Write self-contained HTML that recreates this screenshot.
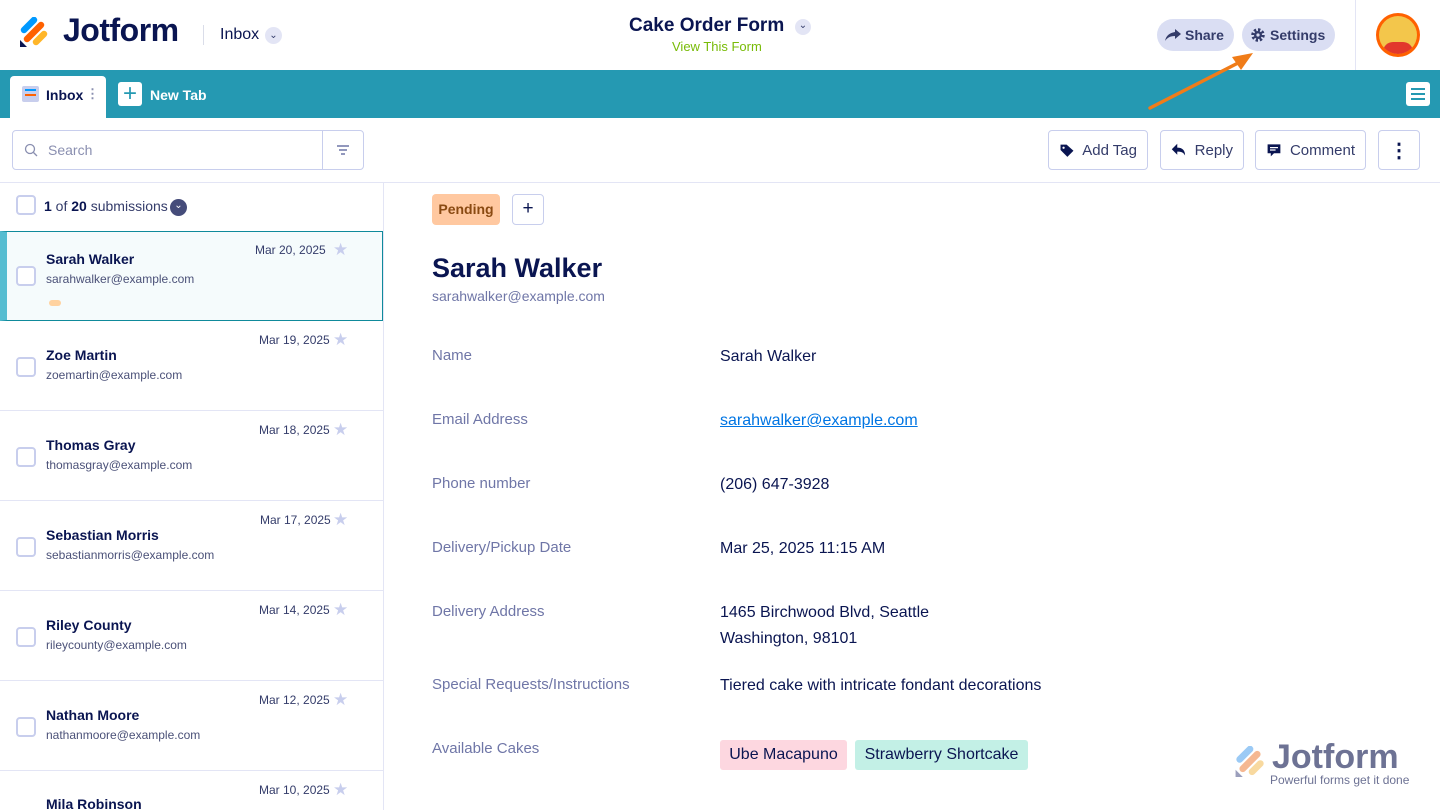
<!DOCTYPE html>
<html><head><meta charset="utf-8"><style>
*{box-sizing:border-box;margin:0;padding:0}
html,body{width:1440px;height:810px;overflow:hidden}
body{font-family:"Liberation Sans",sans-serif;color:#0a1551;background:#fff;position:relative}
.abs{position:absolute;white-space:nowrap}
.btn{position:absolute;top:130px;height:40px;border:1px solid #c8ceed;border-radius:4px;display:flex;align-items:center;font-size:15px;color:#343c6a;gap:8px;padding:0 10px;white-space:nowrap}
.item{position:absolute;left:0;width:383px;height:90px;border-bottom:1px solid #e3e5f5}
.cb{position:absolute;left:16px;width:20px;height:20px;border:2px solid #c8ceed;border-radius:4px;background:#fff}
.nm{position:absolute;left:46px;font-size:14px;font-weight:bold;white-space:nowrap}
.em{position:absolute;left:46px;font-size:12px;color:#4b5178}
.dt{position:absolute;font-size:12px;color:#343c6a;white-space:nowrap}
.st{position:absolute;left:333px;color:#c8ceed;font-size:17px}
.lb{position:absolute;left:432px;font-size:15px;color:#6f76a7}
.vl{position:absolute;left:720px;font-size:16px;color:#0a1551;line-height:26px;white-space:nowrap}
</style></head><body>
<!-- header logo -->
<svg class="abs" style="left:19px;top:17px" width="30" height="31" viewBox="0 0 30 31"><line x1="5" y1="13" x2="15" y2="3" stroke="#0099ff" stroke-width="6.5" stroke-linecap="round"/><line x1="8" y1="22" x2="22" y2="8" stroke="#ff6100" stroke-width="6.5" stroke-linecap="round"/><line x1="17" y1="25" x2="25" y2="17" stroke="#ffb629" stroke-width="6.5" stroke-linecap="round"/><path d="M1 23 L8 30 L1 30Z" fill="#0a1551"/></svg>
<div class="abs" style="left:63px;top:12px;font-size:32px;font-weight:bold;letter-spacing:-0.5px">Jotform</div>
<div class="abs" style="left:203px;top:25px;width:1px;height:20px;background:#dadde9"></div>
<div class="abs" style="left:220px;top:26px;font-size:16px">Inbox</div>
<div class="abs" style="left:265px;top:27px;width:17px;height:17px;border-radius:50%;background:#e3e5f5;font-size:10px;text-align:center;line-height:17px;color:#343c6a">⌄</div>
<div class="abs" style="left:629px;top:15px;font-size:19px;font-weight:bold">Cake Order Form</div>
<div class="abs" style="left:795px;top:19px;width:16px;height:16px;border-radius:50%;background:#e3e5f5;font-size:10px;text-align:center;line-height:14px;color:#343c6a">⌄</div>
<div class="abs" style="left:672px;top:39px;font-size:13px;color:#78bb07">View This Form</div>
<div class="abs" style="left:1157px;top:19px;width:77px;height:32px;border-radius:16px;background:#dadef3;font-size:14px;font-weight:bold;color:#343c6a;line-height:32px;padding-left:28px">Share<svg class="abs" style="left:8px;top:9px" width="16" height="14" viewBox="0 0 16 14"><path d="M10 1l6 5-6 5V8C5 8 2 10 0 13 1 8 4 5 10 4z" fill="#343c6a"/></svg></div>
<div class="abs" style="left:1242px;top:19px;width:93px;height:32px;border-radius:16px;background:#dadef3;font-size:14px;font-weight:bold;color:#343c6a;line-height:32px;padding-left:28px">Settings<svg class="abs" style="left:9px;top:9px" width="14" height="14" viewBox="0 0 14 14"><circle cx="7" cy="7" r="5" fill="none" stroke="#343c6a" stroke-width="3.5" stroke-dasharray="2.2 1.7"/><circle cx="7" cy="7" r="4" fill="#343c6a"/><circle cx="7" cy="7" r="1.6" fill="#dadef3"/></svg></div>
<div class="abs" style="left:1355px;top:0;width:1px;height:70px;background:#e3e5f5"></div>
<div class="abs" style="left:1376px;top:13px;width:44px;height:44px;border-radius:50%;background:#ff6100;padding:3px"><div style="width:38px;height:38px;border-radius:50%;background:#f3c64b;overflow:hidden;position:relative"><div style="position:absolute;bottom:0;left:4px;width:30px;height:12px;background:#e2382c;border-radius:10px 10px 0 0"></div></div></div>
<!-- tab bar -->
<div class="abs" style="left:0;top:70px;width:1440px;height:48px;background:#2599b2"></div>
<div class="abs" style="left:10px;top:76px;width:96px;height:42px;background:#fff;border-radius:4px 4px 0 0"></div>
<div class="abs" style="left:22px;top:86px;width:17px;height:16px;background:#c8ceed;border-radius:2px"><div style="margin:3px 3px;height:2px;background:#0099ff"></div><div style="margin:0 3px;height:2px;background:#ff6100"></div></div>
<div class="abs" style="left:46px;top:87px;font-size:14px;font-weight:bold">Inbox</div>
<div class="abs" style="left:86px;top:86px;font-size:13px;color:#8a8fb0;font-weight:bold">⋮</div>
<div class="abs" style="left:118px;top:82px;width:24px;height:24px;background:#fff;border-radius:3px;color:#2599b2;font-size:24px;text-align:center;line-height:23px">+</div>
<div class="abs" style="left:150px;top:87px;font-size:14px;font-weight:bold;color:#fff">New Tab</div>
<div class="abs" style="left:1406px;top:82px;width:24px;height:24px;background:#fff;border-radius:3px;padding:6px 5px"><div style="height:2px;background:#2599b2;margin-bottom:3px"></div><div style="height:2px;background:#2599b2;margin-bottom:3px"></div><div style="height:2px;background:#2599b2"></div></div>
<!-- arrow -->
<svg class="abs" style="left:1140px;top:40px" width="120" height="75" viewBox="0 0 120 75"><path d="M10 68 L100 22" stroke="#f07c18" stroke-width="3.5" stroke-linecap="round"/><path d="M113 13 L92 17 L101 30Z" fill="#f07c18"/></svg>
<!-- toolbar -->
<div class="abs" style="left:12px;top:130px;width:352px;height:40px;border:1px solid #c8ceed;border-radius:4px"></div>
<div class="abs" style="left:322px;top:131px;width:1px;height:38px;background:#c8ceed"></div>
<svg class="abs" style="left:24px;top:143px" width="14" height="14"><circle cx="6" cy="6" r="4.5" fill="none" stroke="#8a8fb0" stroke-width="1.3"/><path d="M9.5 9.5L13 13" stroke="#8a8fb0" stroke-width="1.3"/></svg>
<div class="abs" style="left:48px;top:142px;font-size:14px;color:#8a8fb0">Search</div>
<svg class="abs" style="left:336px;top:144px" width="14" height="12"><path d="M1 2h12M3 6h8M5 10h4" stroke="#6f76a7" stroke-width="1.5"/></svg>
<div class="btn" style="left:1048px;width:100px"><svg width="20" height="20" viewBox="0 0 20 20"><path d="M2 3v7l9 9 8-8-9-8z" fill="#0a1551"/><circle cx="6" cy="7" r="1.5" fill="#fff"/></svg>Add Tag</div>
<div class="btn" style="left:1160px;width:84px"><svg width="20" height="18" viewBox="0 0 20 18"><path d="M8 1L1 8l7 7v-4c5 0 8 1 10 5 0-6-3-10-10-10z" fill="#0a1551"/></svg>Reply</div>
<div class="btn" style="left:1255px;width:111px"><svg width="20" height="20" viewBox="0 0 20 20"><path d="M2 3h16v11h-8l-4 4v-4H2z" fill="#0a1551"/><path d="M5 7h10M5 10h7" stroke="#fff" stroke-width="1.5"/></svg>Comment</div>
<div class="btn" style="left:1378px;width:42px;justify-content:center;font-weight:bold;font-size:20px;color:#0a1551">⋮</div>
<div class="abs" style="left:0;top:182px;width:1440px;height:1px;background:#e3e5f5"></div>
<div class="abs" style="left:383px;top:182px;width:1px;height:628px;background:#e3e5f5"></div>
<!-- list -->
<div class="cb" style="top:195px"></div>
<div class="abs" style="left:44px;top:198px;font-size:14px;color:#343c6a"><b style="color:#0a1551">1</b> of <b style="color:#0a1551">20</b> submissions</div>
<div class="abs" style="left:170px;top:199px;width:17px;height:17px;border-radius:50%;background:#454c7a;color:#fff;font-size:10px;text-align:center;line-height:14px">⌄</div>
<div class="item" style="top:231px;height:90px;background:#f5fbfc;border:1px solid #0f8a9b;border-left:7px solid #56bdd1"></div>
<div class="cb" style="top:266px"></div><div class="nm" style="top:251px">Sarah Walker</div><div class="em" style="top:272px">sarahwalker@example.com</div><div class="dt" style="top:243px;left:255px">Mar 20, 2025</div><div class="st" style="top:240px">★</div>
<div class="abs" style="left:49px;top:300px;width:12px;height:6px;border-radius:3px;background:#ffd2a0"></div>
<div class="item" style="top:321px"></div><div class="cb" style="top:357px"></div><div class="nm" style="top:347px">Zoe Martin</div><div class="em" style="top:368px">zoemartin@example.com</div><div class="dt" style="top:333px;left:259px">Mar 19, 2025</div><div class="st" style="top:330px">★</div>
<div class="item" style="top:411px"></div><div class="cb" style="top:447px"></div><div class="nm" style="top:437px">Thomas Gray</div><div class="em" style="top:458px">thomasgray@example.com</div><div class="dt" style="top:423px;left:259px">Mar 18, 2025</div><div class="st" style="top:420px">★</div>
<div class="item" style="top:501px"></div><div class="cb" style="top:537px"></div><div class="nm" style="top:527px">Sebastian Morris</div><div class="em" style="top:548px">sebastianmorris@example.com</div><div class="dt" style="top:513px;left:260px">Mar 17, 2025</div><div class="st" style="top:510px">★</div>
<div class="item" style="top:591px"></div><div class="cb" style="top:627px"></div><div class="nm" style="top:617px">Riley County</div><div class="em" style="top:638px">rileycounty@example.com</div><div class="dt" style="top:603px;left:259px">Mar 14, 2025</div><div class="st" style="top:600px">★</div>
<div class="item" style="top:681px"></div><div class="cb" style="top:717px"></div><div class="nm" style="top:707px">Nathan Moore</div><div class="em" style="top:728px">nathanmoore@example.com</div><div class="dt" style="top:693px;left:259px">Mar 12, 2025</div><div class="st" style="top:690px">★</div>
<div class="nm" style="top:796px">Mila Robinson</div><div class="dt" style="top:783px;left:259px">Mar 10, 2025</div><div class="st" style="top:780px">★</div>
<!-- detail -->
<div class="abs" style="left:432px;top:194px;width:68px;height:31px;background:#ffc8a0;border-radius:4px;font-size:14px;font-weight:bold;color:#8a4a12;text-align:center;line-height:31px">Pending</div>
<div class="abs" style="left:512px;top:194px;width:32px;height:31px;border:1px solid #c8ceed;border-radius:4px;text-align:center;line-height:28px;font-size:19px">+</div>
<div class="abs" style="left:432px;top:253px;font-size:27px;font-weight:bold">Sarah Walker</div>
<div class="abs" style="left:432px;top:288px;font-size:14px;color:#6f76a7">sarahwalker@example.com</div>
<div class="lb" style="top:347px">Name</div><div class="vl" style="top:344px">Sarah Walker</div>
<div class="lb" style="top:411px">Email Address</div><div class="vl" style="top:408px;color:#0075e3;text-decoration:underline">sarahwalker@example.com</div>
<div class="lb" style="top:475px">Phone number</div><div class="vl" style="top:472px">(206) 647-3928</div>
<div class="lb" style="top:539px">Delivery/Pickup Date</div><div class="vl" style="top:536px">Mar 25, 2025 11:15 AM</div>
<div class="lb" style="top:603px">Delivery Address</div><div class="vl" style="top:600px">1465 Birchwood Blvd, Seattle<br>Washington, 98101</div>
<div class="lb" style="top:676px">Special Requests/Instructions</div><div class="vl" style="top:673px">Tiered cake with intricate fondant decorations</div>
<div class="lb" style="top:740px">Available Cakes</div>
<div class="abs" style="left:720px;top:740px;width:127px;height:30px;background:#fdd7e0;border-radius:3px;font-size:16px;line-height:30px;text-align:center">Ube Macapuno</div>
<div class="abs" style="left:855px;top:740px;width:173px;height:30px;background:#c3f0e6;border-radius:3px;font-size:16px;line-height:30px;text-align:center">Strawberry Shortcake</div>
<!-- watermark -->
<svg class="abs" style="left:1234px;top:746px" width="32" height="32" viewBox="0 0 30 31" opacity=".6"><line x1="5" y1="13" x2="15" y2="3" stroke="#59a8f0" stroke-width="6.5" stroke-linecap="round"/><line x1="8" y1="22" x2="22" y2="8" stroke="#f08a4a" stroke-width="6.5" stroke-linecap="round"/><line x1="17" y1="25" x2="25" y2="17" stroke="#f5c060" stroke-width="6.5" stroke-linecap="round"/><path d="M1 23 L8 30 L1 30Z" fill="#5a6090"/></svg>
<div class="abs" style="left:1272px;top:738px;font-size:34px;font-weight:bold;color:#6d7294">Jotform</div>
<div class="abs" style="left:1270px;top:773px;font-size:12px;color:#6d7294">Powerful forms get it done</div>
</body></html>
